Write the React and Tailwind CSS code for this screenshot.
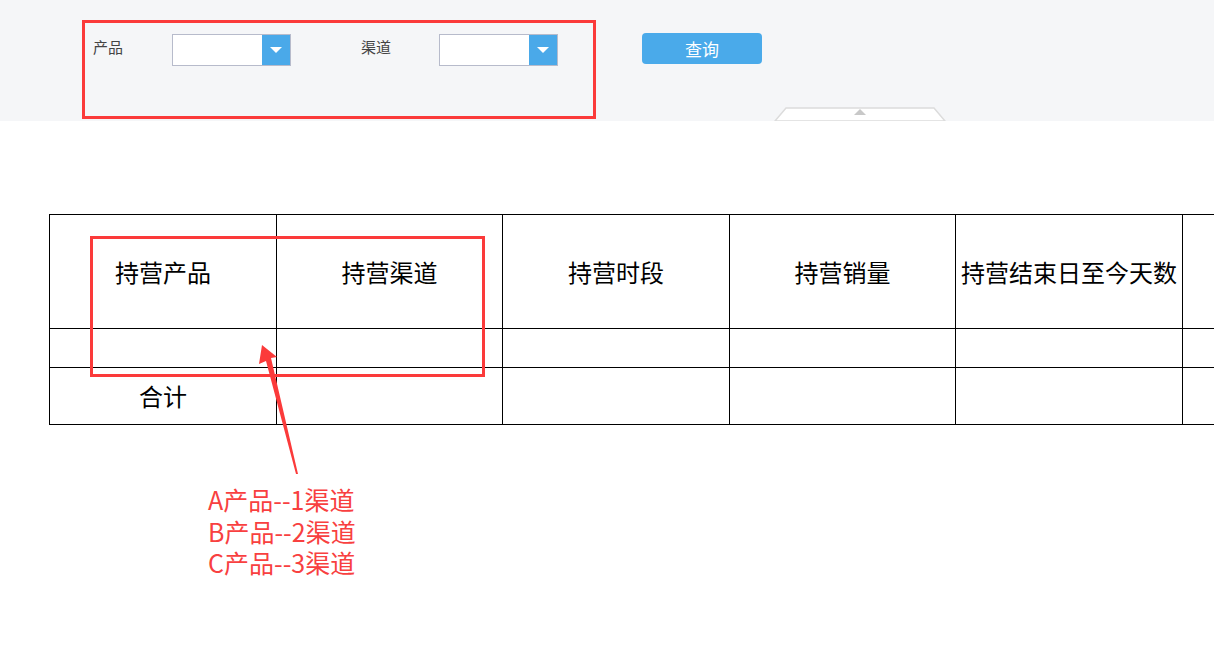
import React from "react";

function Select() {
  return (
    <div className="flex w-[119px] h-[32px] border border-[#b7bbcb] bg-white">
      <div className="flex-1 bg-white" />
      <div className="w-[28px] h-full bg-[#4aa9e9] flex items-center justify-center">
        <svg width="12" height="6" viewBox="0 0 12 6">
          <polygon points="0,0 12,0 6,6" fill="#ffffff" />
        </svg>
      </div>
    </div>
  );
}

const headers = ["持营产品", "持营渠道", "持营时段", "持营销量", "持营结束日至今天数", ""];
const widths = [227, 226, 227, 226, 227, 226];

export default function App() {
  return (
    <div className="relative w-[1214px] h-[650px] overflow-hidden bg-white font-['Noto_Sans_CJK_SC','Noto_Sans',sans-serif]">
      {/* Filter band */}
      <div className="relative h-[121px] bg-[#f5f6f8]">
        <div className="flex items-start pt-[33px] pl-[93px]">
          <div className="w-[79px] h-[28px] flex items-center text-[15px] text-[#444]">产品</div>
          <div className="mt-[1px]"><Select /></div>
          <div className="w-[70px]" />
          <div className="w-[78px] h-[28px] flex items-center text-[15px] text-[#444]">渠道</div>
          <div className="mt-[1px]"><Select /></div>
          <div className="w-[84px]" />
          <button className="w-[120px] h-[31px] rounded-[4px] bg-[#4aaaea] text-white text-[17px] leading-none flex items-center justify-center">
            查询
          </button>
        </div>
        {/* collapse tab */}
        <svg className="absolute left-[774px] bottom-0" width="172" height="14" viewBox="0 0 172 14">
          <polygon points="12,1 160,1 171,14 1,14" fill="#ffffff" stroke="#dcdcdc" strokeWidth="1.5" />
          <polygon points="86,2 92,8 80,8" fill="#c8c8c8" />
        </svg>
      </div>

      {/* Table */}
      <div className="ml-[49px] mt-[93px]">
        <table className="table-fixed border-collapse text-[24px] text-black w-[1359px]">
          <colgroup>
            {widths.map((w, i) => (
              <col key={i} style={{ width: w }} />
            ))}
          </colgroup>
          <tbody>
            <tr className="h-[114px]">
              {headers.map((h, i) => (
                <td key={i} className="border border-black text-center align-middle p-0 whitespace-nowrap">
                  {h}
                </td>
              ))}
            </tr>
            <tr className="h-[39px]">
              {headers.map((_, i) => (
                <td key={i} className="border border-black p-0" />
              ))}
            </tr>
            <tr className="h-[57px]">
              {headers.map((_, i) => (
                <td key={i} className="border border-black p-0 text-center align-middle">
                  {i === 0 ? "合计" : ""}
                </td>
              ))}
            </tr>
          </tbody>
        </table>
      </div>

      {/* Annotations */}
      <div className="absolute left-[82px] top-[20px] w-[514px] h-[99px] border-[3px] border-[#fb3a3a]" />
      <div className="absolute left-[90px] top-[236px] w-[395px] h-[141px] border-[3px] border-[#fb3a3a]" />
      <svg className="absolute left-0 top-0 pointer-events-none" width="1214" height="650" viewBox="0 0 1214 650">
        <polygon
          points="262,345 277,357 271,358 298,474 296,474 266,361 259,364"
          fill="#fb3a3a"
        />
      </svg>
      <div className="absolute left-[208px] top-[484px] text-[25px] leading-[31.5px] text-[#f84040] whitespace-nowrap">
        <div>A产品--1渠道</div>
        <div>B产品--2渠道</div>
        <div>C产品--3渠道</div>
      </div>
    </div>
  );
}
